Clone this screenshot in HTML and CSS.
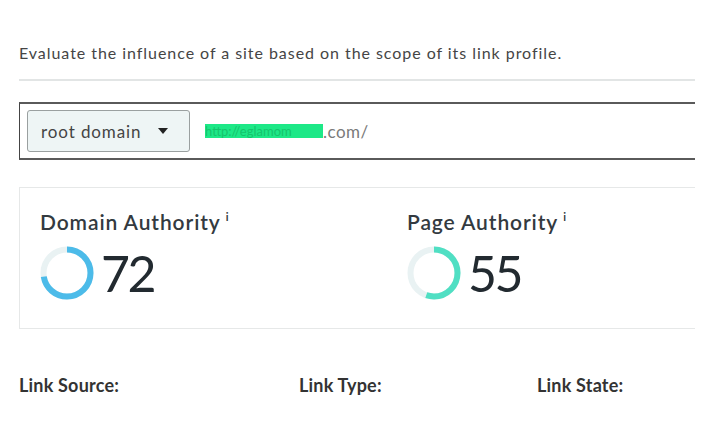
FILE: index.html
```html
<!DOCTYPE html>
<html>
<head>
<meta charset="utf-8">
<link rel="stylesheet" href="styles.css">
</head>
<body>
<div class="page">
  <p class="desc">Evaluate the influence of a site based on the scope of its link profile.</p>
  <div class="rule"></div>
  <div class="search">
    <div class="select">root domain <span class="caret"></span></div>
    <div class="url"><span class="redact">http://eglamom</span><span class="tld">.com/</span></div>
  </div>
  <div class="card">
    <div class="metric">
      <h2 class="mtitle">Domain Authority<sup>i</sup></h2>
      <div class="mvalue">
        <svg class="donut" width="54" height="54" viewBox="0 0 54 54">
          <circle cx="27" cy="27" r="23.5" fill="none" stroke="#e9f2f3" stroke-width="6"/>
          <circle cx="27" cy="27" r="23.5" fill="none" stroke="#4cbbe9" stroke-width="6" stroke-dasharray="106.3 147.7" transform="rotate(-90 27 27)"/>
        </svg>
        <span class="num">72</span>
      </div>
    </div>
    <div class="metric">
      <h2 class="mtitle">Page Authority<sup>i</sup></h2>
      <div class="mvalue">
        <svg class="donut" width="54" height="54" viewBox="0 0 54 54">
          <circle cx="27" cy="27" r="23.5" fill="none" stroke="#e9f2f3" stroke-width="6"/>
          <circle cx="27" cy="27" r="23.5" fill="none" stroke="#50dfc3" stroke-width="6" stroke-dasharray="81.2 147.7" transform="rotate(-90 27 27)"/>
        </svg>
        <span class="num">55</span>
      </div>
    </div>
  </div>
  <div class="filters">
    <span class="flabel f1">Link Source:</span>
    <span class="flabel f2">Link Type:</span>
    <span class="flabel f3">Link State:</span>
  </div>
</div>
</body>
</html>
```

FILE: styles.css
```css
html, body {
  margin: 0;
  padding: 0;
  background: #ffffff;
}
body {
  font-family: Lato, "Open Sans", sans-serif;
  color: #333;
}
.page {
  width: 676px;
  margin-left: 19px;
  padding-top: 42px;
}
.desc {
  margin: 0;
  font-size: 16px;
  line-height: 21px;
  letter-spacing: 0.95px;
  color: #454545;
  white-space: nowrap;
}
.rule {
  margin-top: 16px;
  height: 2px;
  background: #e2e5e5;
}
.search {
  margin-top: 21px;
  height: 54px;
  border-top: 2px solid #5a5a5a;
  border-bottom: 2px solid #5a5a5a;
  border-left: 1px solid #444;
  display: flex;
  align-items: center;
  padding-left: 7px;
}
.select {
  box-sizing: border-box;
  width: 163px;
  height: 42px;
  background: #eef5f5;
  border: 1px solid #9aa0a0;
  border-radius: 3px;
  display: flex;
  align-items: center;
  padding-left: 13px;
  font-size: 17px;
  letter-spacing: 0.9px;
  color: #444;
}
.caret {
  margin-left: 17px;
  width: 0;
  height: 0;
  border-left: 5px solid transparent;
  border-right: 5px solid transparent;
  border-top: 6px solid #222;
}
.url {
  margin-left: 15px;
  font-size: 17px;
  display: flex;
  align-items: center;
}
.redact {
  display: inline-block;
  width: 118px;
  height: 14px;
  line-height: 14px;
  background: #1de887;
  color: #14c46c;
  font-size: 13px;
  overflow: hidden;
  white-space: nowrap;
}
.tld {
  color: #7a7a7a;
  letter-spacing: 0.5px;
}
.card {
  margin-top: 27px;
  height: 140px;
  border-top: 1px solid #e6e8e8;
  border-bottom: 1px solid #e6e8e8;
  border-left: 1px solid #e6e8e8;
  display: flex;
  padding-left: 20px;
}
.metric {
  width: 367px;
}
.metric + .metric {
  width: auto;
}
.mtitle {
  margin: 21px 0 0 0;
  font-size: 21px;
  line-height: 26px;
  font-weight: 600;
  letter-spacing: 0.9px;
  color: #333a40;
}
.mtitle sup {
  font-size: 11px;
  font-weight: 700;
  margin-left: 5px;
  vertical-align: 9px;
  line-height: 0;
}
.mvalue {
  margin-top: 11px;
  display: flex;
  align-items: center;
}
.donut {
  display: block;
}
.num {
  margin-left: 7px;
  font-size: 50px;
  font-weight: 400;
  line-height: 54px;
  color: #222a30;
  letter-spacing: -2.5px;
}
.filters {
  margin-top: 45px;
  display: flex;
  font-size: 18px;
  line-height: 22px;
  font-weight: 700;
  letter-spacing: 0.2px;
  color: #333;
}
.flabel {
  display: block;
}
.f1 { width: 280px; }
.f2 { width: 238px; }
```
